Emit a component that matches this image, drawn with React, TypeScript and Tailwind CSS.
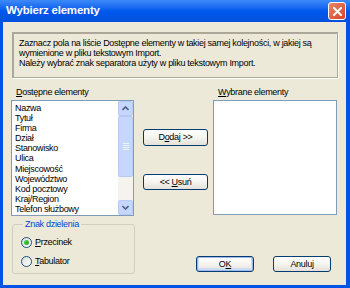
import React from 'react'

const items = [
  'Nazwa',
  'Tytuł',
  'Firma',
  'Dział',
  'Stanowisko',
  'Ulica',
  'Miejscowość',
  'Województwo',
  'Kod pocztowy',
  'Kraj/Region',
  'Telefon służbowy',
]

const font = { fontFamily: '"Liberation Sans", Arial, sans-serif' }

interface XpButtonProps {
  children: React.ReactNode
  isDefault?: boolean
}

const XpButton: React.FC<XpButtonProps> = ({ children, isDefault }) => {
  return (
    <button
      className={
        'flex items-center justify-center rounded-[3px] border border-[#003C74] bg-gradient-to-b from-white via-[#F5F4EF] to-[#E3E1D7] text-[9px] leading-none text-black tracking-[-0.3px] ' +
        (isDefault ? 'shadow-[inset_0_0_0_1px_#9DB9EB,inset_0_-1px_0_2px_#CEDDF5]' : '')
      }
    >
      {children}
    </button>
  )
}

const Radio: React.FC<{ checked?: boolean }> = ({ checked }) => (
  <span className="flex h-[11px] w-[11px] items-center justify-center rounded-full border border-[#1C5180] bg-gradient-to-br from-[#DCDCD7] to-white">
    {checked && <span className="h-[5px] w-[5px] rounded-full bg-gradient-to-br from-[#55D551] to-[#21A121]" />}
  </span>
)

const ScrollArrow: React.FC<{ up?: boolean }> = ({ up }) => (
  <div className="flex h-[15px] w-full items-center justify-center rounded-[2px] border border-[#B7CAF5] bg-[#C6D6FC]">
    <svg width="7" height="5" viewBox="0 0 7 5">
      <path
        d={up ? 'M0.5 4 L3.5 1 L6.5 4' : 'M0.5 1 L3.5 4 L6.5 1'}
        fill="none"
        stroke="#4D6185"
        strokeWidth="1.6"
      />
    </svg>
  </div>
)

export default function App() {
  return (
    <div className="w-[350px] h-[288px] flex flex-col bg-[#0054E3]" style={font}>
      {/* Title bar */}
      <div className="h-[22px] flex items-center justify-between pl-[6px] pr-[4px] bg-gradient-to-b from-[#3D8AF7] via-[#0058EE] to-[#0050DC]">
        <span className="text-[11.5px] font-bold text-white tracking-[-0.2px]">Wybierz elementy</span>
        <div className="flex h-[18px] w-[18px] items-center justify-center rounded-[3px] border border-white bg-gradient-to-br from-[#E9866B] to-[#D8401F]">
          <svg width="9" height="9" viewBox="0 0 9 9">
            <path d="M1 1 L8 8 M8 1 L1 8" stroke="white" strokeWidth="2" strokeLinecap="square" />
          </svg>
        </div>
      </div>

      {/* Body */}
      <div className="flex-1 ml-[3px] mr-[4px] mb-[3px] bg-[#ECE9D8] flex flex-col text-[9px] tracking-[-0.3px] text-black">
        {/* Info */}
        <div className="mt-[10px] ml-[9px] w-[326px] h-[46px] border border-[#ACA899] shadow-[inset_1px_1px_0_#ACA899,1px_1px_0_white] pl-[6px] pt-[5px] leading-[10px]">
          <p>Zaznacz pola na liście Dostępne elementy w takiej samej kolejności, w jakiej są</p>
          <p>wymienione w pliku tekstowym Import.</p>
          <p>Należy wybrać znak separatora użyty w pliku tekstowym Import.</p>
        </div>

        {/* Lists */}
        <div className="flex mt-[9px]">
          <div className="ml-[8px] w-[123px] flex flex-col">
            <div className="pl-[5px] h-[13px] leading-[10px]">
              <span className="underline">D</span>ostępne elementy
            </div>
            <div className="h-[116px] border border-[#7F9DB9] bg-white flex">
              <div className="flex-1 pl-[3px] pt-[2px] leading-[10.1px]">
                {items.map((it) => (
                  <div key={it}>{it}</div>
                ))}
              </div>
              <div className="w-[15px] flex flex-col bg-[#F4F3EE]">
                <ScrollArrow up />
                <div className="h-[61px] rounded-[2px] border border-[#B7CAF5] bg-[#C6D6FC] flex flex-col items-center justify-center gap-[1px]">
                  <div className="w-[6px] h-px bg-[#EEF4FE]" />
                  <div className="w-[6px] h-px bg-[#EEF4FE]" />
                  <div className="w-[6px] h-px bg-[#EEF4FE]" />
                  <div className="w-[6px] h-px bg-[#EEF4FE]" />
                </div>
                <div className="flex-1" />
                <ScrollArrow />
              </div>
            </div>
          </div>

          <div className="ml-[9px] w-[63px] flex flex-col pt-[42px]">
            <div className="h-[17px] flex">
              <XpButton>
                <span className="w-[63px] h-[17px] flex items-center justify-center">
                  D<span className="underline">o</span>daj &gt;&gt;
                </span>
              </XpButton>
            </div>
            <div className="h-[16px] mt-[28px] flex">
              <XpButton>
                <span className="w-[63px] h-[16px] flex items-center justify-center">
                  &lt;&lt; <span className="underline ml-[2px]">U</span>suń
                </span>
              </XpButton>
            </div>
          </div>

          <div className="ml-[7px] w-[124px] flex flex-col">
            <div className="pl-[5px] h-[13px] leading-[10px]">
              <span className="underline">W</span>ybrane elementy
            </div>
            <div className="h-[115px] border border-[#7F9DB9] bg-white" />
          </div>
        </div>

        {/* Bottom */}
        <div className="flex mt-[3px]">
          <fieldset className="ml-[9px] w-[123px] h-[55px] border border-[#D0D0BF] rounded-[3px] pl-[8px]">
            <legend className="ml-[2px] px-[2px] text-[#0046D5] leading-[10px]">Znak dzielenia</legend>
            <div className="flex items-center gap-[3px] mt-[7px]">
              <Radio checked />
              <span>
                <span className="underline">P</span>rzecinek
              </span>
            </div>
            <div className="flex items-center gap-[3px] mt-[5px]">
              <Radio />
              <span>
                <span className="underline">T</span>abulator
              </span>
            </div>
          </fieldset>

          <div className="flex items-start mt-[37px] ml-[61px] gap-[19px]">
            <div className="h-[16px] flex">
              <XpButton isDefault>
                <span className="w-[56px] h-[16px] flex items-center justify-center">
                  O<span className="underline">K</span>
                </span>
              </XpButton>
            </div>
            <div className="h-[16px] flex">
              <XpButton>
                <span className="w-[56px] h-[16px] flex items-center justify-center">Anuluj</span>
              </XpButton>
            </div>
          </div>
        </div>
      </div>
    </div>
  )
}
